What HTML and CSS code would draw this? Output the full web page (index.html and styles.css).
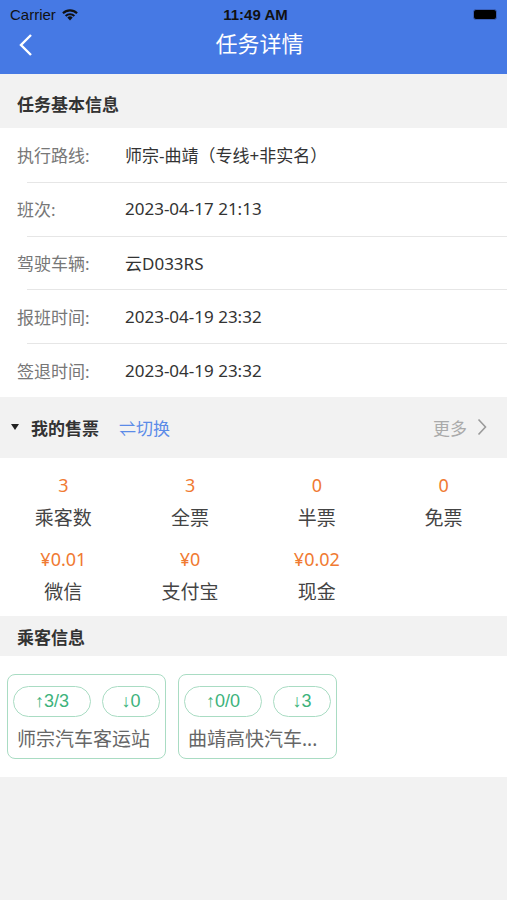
FILE: index.html
```html
<!DOCTYPE html>
<html>
<head>
    <meta charset="utf-8">
    <meta name="viewport" content="width=device-width, initial-scale=1">
    <title>任务详情</title>
    <link rel="stylesheet" href="styles.css">
</head>
<body>
    <header class="topbar">
        <div class="statusbar">
            <div class="carrier">Carrier
                <svg class="wifi" width="18" height="13" viewBox="0 0 18 13">
                    <path d="M9 12.5 L6.3 9.6 A4 4 0 0 1 11.7 9.6 Z" fill="#111"/>
                    <path d="M3.9 7.2 A7.4 7.4 0 0 1 14.1 7.2 L12.6 8.7 A5.3 5.3 0 0 0 5.4 8.7 Z" fill="#111"/>
                    <path d="M1.2 4.5 A11.2 11.2 0 0 1 16.8 4.5 L15.3 6 A9.1 9.1 0 0 0 2.7 6 Z" fill="#111"/>
                </svg>
            </div>
            <div class="clock">11:49 AM</div>
            <div class="battery"><span></span></div>
        </div>
        <div class="navdiv">
            <a href="#" class="back">
                <svg width="14" height="24" viewBox="0 0 14 24"><path d="M12 2 L2 12 L12 22" fill="none" stroke="#fff" stroke-width="2.4"/></svg>
            </a>
            <div class="title">任务详情</div>
        </div>
    </header>

    <div class="section-head">任务基本信息</div>
    <ul class="info">
        <li><span class="label">执行路线:</span><span class="value">师宗-曲靖（专线+非实名）</span></li>
        <li><span class="label">班次:</span><span class="value">2023-04-17 21:13</span></li>
        <li><span class="label">驾驶车辆:</span><span class="value">云D033RS</span></li>
        <li><span class="label">报班时间:</span><span class="value">2023-04-19 23:32</span></li>
        <li><span class="label">签退时间:</span><span class="value">2023-04-19 23:32</span></li>
    </ul>

    <div class="sale-head">
        <span class="caret"></span>
        <span class="sale-title">我的售票</span>
        <a href="#" class="switch">⇌切换</a>
        <a href="#" class="more">更多
            <svg width="10" height="18" viewBox="0 0 10 18"><path d="M1.5 1.5 L8.5 9 L1.5 16.5" fill="none" stroke="#9a9a9a" stroke-width="1.6"/></svg>
        </a>
    </div>
    <div class="stats">
        <div class="stat"><span class="num">3</span><span class="name">乘客数</span></div>
        <div class="stat"><span class="num">3</span><span class="name">全票</span></div>
        <div class="stat"><span class="num">0</span><span class="name">半票</span></div>
        <div class="stat"><span class="num">0</span><span class="name">免票</span></div>
        <div class="stat"><span class="num">¥0.01</span><span class="name">微信</span></div>
        <div class="stat"><span class="num">¥0</span><span class="name">支付宝</span></div>
        <div class="stat"><span class="num">¥0.02</span><span class="name">现金</span></div>
    </div>

    <div class="section-head small">乘客信息</div>
    <div class="stations">
        <div class="card">
            <div class="pills"><span class="pill wide">↑3/3</span><span class="pill">↓0</span></div>
            <div class="station">师宗汽车客运站</div>
        </div>
        <div class="card">
            <div class="pills"><span class="pill wide">↑0/0</span><span class="pill">↓3</span></div>
            <div class="station">曲靖高快汽车...</div>
        </div>
    </div>
</body>
</html>
```

FILE: styles.css
```css
* {
    box-sizing: border-box;
    text-decoration: none;
}
body {
    margin: 0;
    background: #f2f2f2;
    font-family: "Noto Sans", "Noto Sans CJK SC", sans-serif;
    color: #333;
}
ul {
    padding: 0;
    margin: 0;
}
li {
    list-style: none;
}

/* top bar */
.topbar {
    background: #4679e4;
    height: 74px;
}
.statusbar {
    height: 28px;
    display: flex;
    align-items: center;
    justify-content: space-between;
    padding: 0 10px 0 10px;
    font-family: "Liberation Sans", sans-serif;
    font-size: 15px;
    color: #111;
}
.carrier {
    display: flex;
    align-items: center;
    gap: 5px;
    width: 100px;
}
.clock {
    font-weight: bold;
    padding-left: 4px;
}
.battery {
    width: 100px;
    display: flex;
    justify-content: flex-end;
}
.battery span {
    display: block;
    width: 24px;
    height: 11px;
    background: #000;
    border-radius: 3px;
    border: 1px solid #3a5fb8;
}
.navdiv {
    height: 46px;
    display: flex;
    align-items: center;
    justify-content: center;
    position: relative;
}
.back {
    position: absolute;
    left: 19px;
    top: 5px;
}
.title {
    color: #fff;
    font-size: 22px;
    margin-top: -18px;
    margin-left: 12px;
}

/* section headers */
.section-head {
    height: 54px;
    display: flex;
    align-items: center;
    padding: 4px 17px 0;
    font-size: 17px;
    font-weight: bold;
    color: #333;
}
.section-head.small {
    height: 40px;
    padding-top: 2px;
}

/* info list */
.info {
    background: #fff;
}
.info li {
    height: 53.8px;
    display: flex;
    align-items: center;
    padding-left: 17px;
    font-size: 17px;
    position: relative;
}
.info li + li::before {
    content: "";
    position: absolute;
    left: 27px;
    right: 0;
    top: 0;
    border-top: 1px solid #e6e6e6;
}
.label {
    width: 108px;
    color: #777;
}
.value {
    color: #333;
}

/* sales */
.sale-head {
    height: 61px;
    display: flex;
    align-items: center;
    padding: 0 20px 0 11px;
    font-size: 17px;
}
.caret {
    width: 0;
    height: 0;
    border-left: 4.5px solid transparent;
    border-right: 4.5px solid transparent;
    border-top: 6px solid #222;
    margin-right: 12px;
}
.sale-title {
    font-weight: bold;
    color: #333;
}
.switch {
    color: #5b8be8;
    margin-left: 20px;
}
.more {
    margin-left: auto;
    color: #aaa;
    display: flex;
    align-items: center;
    gap: 10px;
}
.stats {
    background: #fff;
    display: grid;
    grid-template-columns: repeat(4, 1fr);
    padding: 13px 0 5px;
    row-gap: 8px;
}
.stat {
    display: flex;
    flex-direction: column;
    align-items: center;
}
.num {
    color: #f07a32;
    font-size: 18px;
    line-height: 28px;
}
.name {
    color: #444;
    font-size: 19px;
    line-height: 38px;
}

/* passenger stations */
.stations {
    background: #fff;
    display: flex;
    gap: 12px;
    padding: 18px 7px 18px;
    height: 121px;
}
.card {
    width: 159px;
    height: 85px;
    border: 1px solid #a9dcc3;
    border-radius: 8px;
    padding: 11px 5px 0;
}
.pills {
    display: flex;
    gap: 11px;
}
.pill {
    height: 31px;
    width: 58px;
    border: 1px solid #a9dcc3;
    border-radius: 16px;
    display: flex;
    align-items: center;
    justify-content: center;
    color: #3db37c;
    font-family: "Liberation Sans", sans-serif;
    font-size: 18px;
}
.pill.wide {
    width: 78px;
}
.station {
    margin-top: 7px;
    color: #666;
    font-size: 19px;
    white-space: nowrap;
    padding-left: 4px;
}
```
